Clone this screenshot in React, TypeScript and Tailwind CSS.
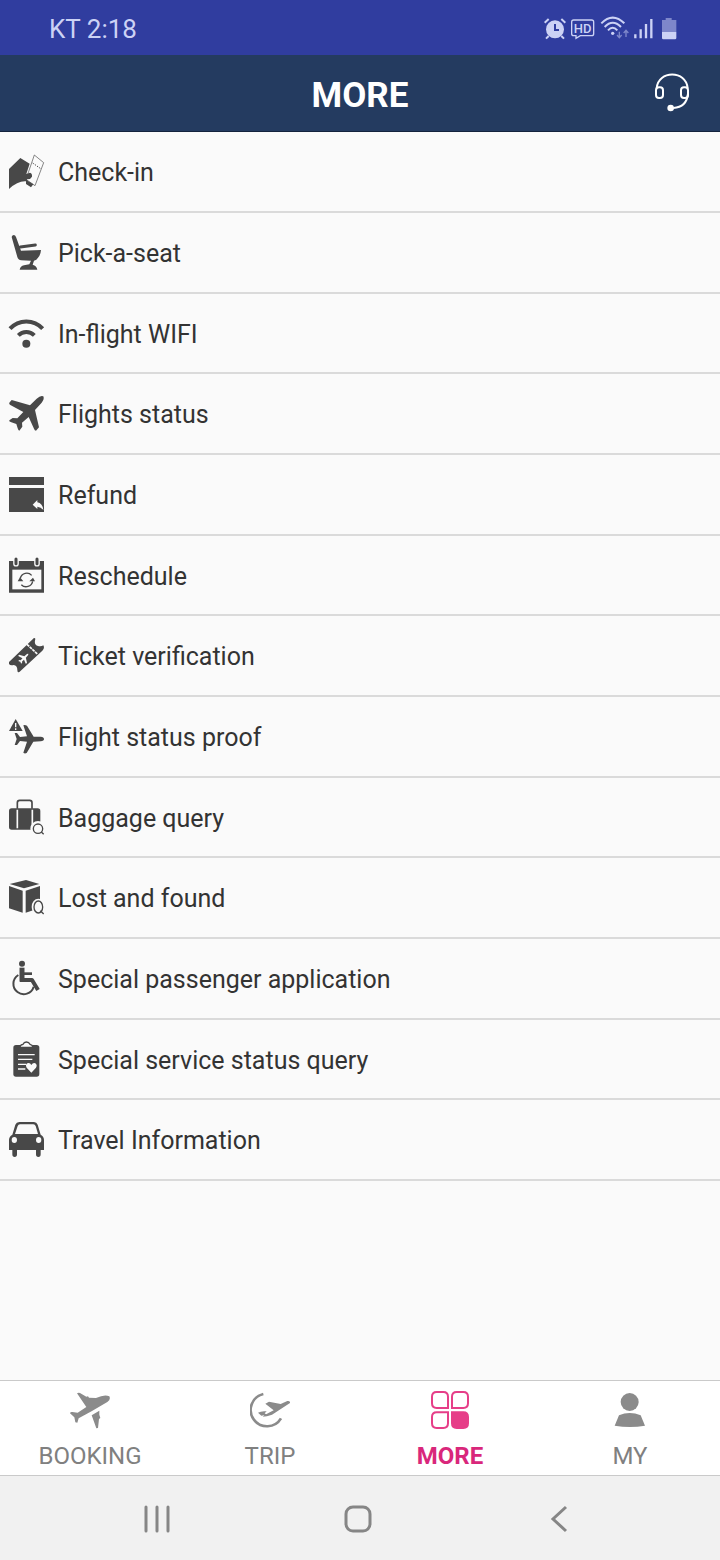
import type { ReactNode } from 'react';

interface MenuItem {
  key: string;
  label: string;
  icon: ReactNode;
}

const PLANE =
  'M86 8 Q98 -3 106 1 Q110 9 101 20 L81 42 L93 94 L84 104 Q80 104 78 98 L62 63 L42 80 L43 92 L34 104 Q31 104 29 97 L25 84 L8 78 Q2 76 4 73 L14 66 L28 67 L46 48 L7 27 Q2 24 4 20 L11 12 L66 28 Z';

const menuItems: MenuItem[] = [
  {
    key: 'check-in',
    label: 'Check-in',
    icon: (
      <>
        <path d="M79 3 L107 26 L81 95 L54 76 Z" fill="#fafafa" stroke="currentColor" strokeWidth="2" />
        <path d="M74 27 L98 44" stroke="currentColor" strokeWidth="3" strokeDasharray="4 4" />
        <path d="M3 105 V45 L37 12 L65 29 L55 60 L66 56 Q73 57 72 68 L66 75 L56 76 L60 81 L76 91 L69 100 L54 90 L54 82 Q30 80 3 105 Z" />
      </>
    ),
  },
  {
    key: 'seat',
    label: 'Pick-a-seat',
    icon: (
      <>
        <path d="M11 6 Q11 1 17 0 Q22 0 24 6 L39 47 L99 45 Q98 60 90 68 Q86 75 78 77 L74 89 Q86 92 88 104 H35 Q37 93 48 91 L64 88 L69 77 L40 76 Q30 75 28 66 Z" />
        <path d="M37 36 L82 30" stroke="currentColor" strokeWidth="9" strokeLinecap="round" />
      </>
    ),
  },
  {
    key: 'wifi',
    label: 'In-flight WIFI',
    icon: (
      <>
        <path d="M6 38 A66 66 0 0 1 104 38 M31 58 A34 34 0 0 1 79 58" fill="none" stroke="currentColor" strokeWidth="12" />
        <circle cx="55" cy="83" r="12" />
      </>
    ),
  },
  {
    key: 'status',
    label: 'Flights status',
    icon: <path d={PLANE} />,
  },
  {
    key: 'refund',
    label: 'Refund',
    icon: (
      <>
        <path d="M3 0 H108 V24 H3 Z M3 33 H108 V105 H3 Z" />
        <path d="M74 83 L88 69 V76 Q104 79 106 99 Q99 90 88 89 V96 Z" fill="#fafafa" />
      </>
    ),
  },
  {
    key: 'reschedule',
    label: 'Reschedule',
    icon: (
      <>
        <path d="M3 9 H108 V104 H3 Z" />
        <path d="M13 35 H100 V94 H13 Z" fill="#fafafa" />
        <path d="M24 3 V17 M87 3 V17" stroke="#fafafa" strokeWidth="17" strokeLinecap="round" />
        <path d="M24 3 V17 M87 3 V17" stroke="currentColor" strokeWidth="9" strokeLinecap="round" />
        <path d="M37 60 A20 20 0 0 1 71 52 M74 70 A20 20 0 0 1 40 80" fill="none" stroke="currentColor" strokeWidth="4" />
        <path d="M29 70 L36 58 L46 70 Z M64 70 L75 59 L81 70 Z" />
      </>
    ),
  },
  {
    key: 'verification',
    label: 'Ticket verification',
    icon: (
      <>
        <path d="M3 72 L74 4 Q79 -3 82 2 Q77 21 90 24 Q100 26 106 22 Q111 31 103 38 L35 101 Q28 106 28 96 Q28 82 17 81 Q7 84 3 78 Z" />
        <path d="M57 19 L88 48" stroke="#fafafa" strokeWidth="5" strokeDasharray="9 2" />
        <path d={PLANE} transform="translate(30 47) scale(0.29)" fill="#fafafa" />
      </>
    ),
  },
  {
    key: 'proof',
    label: 'Flight status proof',
    icon: (
      <>
        <path d="M3 36 L23 0 L44 36 Z" />
        <path d="M23 12 V25 M23 28 V33" stroke="#fafafa" strokeWidth="4" />
        <path d="M98 53 Q108 54 108 60 Q108 66 98 67 L76 68 L56 102 Q50 105 46 101 L57 68 L36 66 L27 78 H20 L26 60 L20 42 H27 L36 54 L57 52 L46 19 Q50 16 57 20 L77 53 Z" />
      </>
    ),
  },
  {
    key: 'baggage',
    label: 'Baggage query',
    icon: (
      <>
        <path d="M28 26 V8 Q28 1 35 1 H65 Q72 1 72 8 V26" fill="none" stroke="currentColor" strokeWidth="5" />
        <rect x="3" y="25" width="94" height="64" rx="8" />
        <path d="M28 29 V85 M73 29 V85" stroke="#fafafa" strokeWidth="5" />
        <circle cx="90" cy="86" r="23" fill="#fafafa" />
        <circle cx="90" cy="86" r="14" fill="none" stroke="currentColor" strokeWidth="4" />
        <path d="M100 96 L107 103" stroke="currentColor" strokeWidth="4" />
      </>
    ),
  },
  {
    key: 'lost',
    label: 'Lost and found',
    icon: (
      <>
        <path d="M5 12 L54 0 L94 12 L48 25 Z M3 18 L44 32 V98 L3 85 Z M53 32 L96 18 V84 L53 98 Z" />
        <ellipse cx="91" cy="81" rx="20" ry="25" fill="#fafafa" />
        <ellipse cx="91" cy="81" rx="13" ry="18" fill="none" stroke="currentColor" strokeWidth="4" />
        <path d="M97 92 L107 102" stroke="currentColor" strokeWidth="4" />
      </>
    ),
  },
  {
    key: 'special-passenger',
    label: 'Special passenger application',
    icon: (
      <>
        <circle cx="42" cy="8" r="9" />
        <g fill="none" stroke="currentColor">
          <path d="M42 20 V62" strokeWidth="15" />
          <path d="M36 57 H72 L90 87" strokeWidth="12" strokeLinejoin="round" />
          <path d="M46 38 H72" strokeWidth="8" />
          <path d="M31 42 A31 31 0 1 0 77 77" strokeWidth="6" />
        </g>
      </>
    ),
  },
  {
    key: 'special-service',
    label: 'Special service status query',
    icon: (
      <>
        <rect x="16" y="9" width="78" height="95" rx="8" />
        <path d="M35 16 Q37 8 45 7 Q48 0 55 0 Q63 0 66 7 Q73 8 75 16 Z" fill="#fafafa" stroke="currentColor" strokeWidth="4" />
        <path d="M30 38 H80 M30 52 H73 M30 67 H54 M30 81 H52" stroke="#fafafa" strokeWidth="4" />
        <path d="M70 92 L56 77 Q51 68 58 64 Q66 61 70 69 Q75 61 82 64 Q89 69 84 77 Z" fill="#fafafa" />
      </>
    ),
  },
  {
    key: 'travel',
    label: 'Travel Information',
    icon: (
      <>
        <path d="M34 0 H78 Q86 0 89 8 L98 38 Q108 43 108 54 V84 H98 V97 Q98 105 91 105 Q84 105 84 97 V84 H27 V97 Q27 105 20 105 Q13 105 13 97 V84 H3 V54 Q3 43 13 38 L22 8 Q25 0 34 0 Z" />
        <path d="M36 7 H76 Q81 7 83 12 L90 36 H21 L29 12 Q31 7 36 7 Z" fill="#fafafa" />
        <ellipse cx="19" cy="54" rx="8" ry="9" fill="#fafafa" />
        <ellipse cx="92" cy="54" rx="8" ry="9" fill="#fafafa" />
      </>
    ),
  },
];

const tabs: MenuItem[] = [
  {
    key: 'booking',
    label: 'BOOKING',
    icon: (
      <path d="M21 10 Q25 7 30 9 L49 20 L54 19 L57 23 L78 24 Q104 12 118 19 Q123 28 112 36 L66 63 L26 85 L22 98 L16 97 L13 82 L0 70 Q1 65 7 66 L23 68 L49 51 Z M65 76 L88 62 V74 L91 84 L87 87 L84 114 L79 115 Z" />
    ),
  },
  {
    key: 'trip',
    label: 'TRIP',
    icon: (
      <>
        <path d="M40 12 A49 49 0 1 0 93 85" fill="none" stroke="currentColor" strokeWidth="8" />
        <path d="M46 41 L57 35 L92 42 L112 33 Q121 32 120 39 L66 74 Q50 80 38 80 L44 75 L71 61 Z M24 68 Q34 62 50 64 L44 70 L50 74 L34 77 Z" />
      </>
    ),
  },
  {
    key: 'more',
    label: 'MORE',
    icon: (
      <g stroke="currentColor" strokeWidth="6">
        <path d="M20 6 H40 Q54 6 54 20 V54 H20 Q6 54 6 40 V20 Q6 6 20 6 Z" fill="none" />
        <path d="M80 6 H100 Q114 6 114 20 V40 Q114 54 100 54 H66 V20 Q66 6 80 6 Z" fill="none" />
        <path d="M20 67 H54 V100 Q54 114 40 114 H20 Q6 114 6 100 V81 Q6 67 20 67 Z" fill="none" />
        <path d="M66 67 H100 Q114 67 114 81 V100 Q114 114 100 114 H80 Q66 114 66 100 Z" />
      </g>
    ),
  },
  {
    key: 'my',
    label: 'MY',
    icon: (
      <>
        <circle cx="59" cy="36" r="27" />
        <path d="M14 107 L27 76 Q59 62 92 76 L105 107 Q60 115 14 107 Z" />
      </>
    ),
  },
];

export default function App() {
  return (
    <div className="flex min-h-screen flex-col bg-[#fafafa] font-[Roboto,sans-serif]">
      <StatusBar />

      <header className="grid h-[77px] grid-cols-[1fr_auto_1fr] items-center border-b border-[#14233d] bg-[#243b60] px-[30px] text-white">
        <h1 className="col-start-2 pt-1.5 text-[35px] leading-10 font-bold">MORE</h1>
        <button type="button" aria-label="Customer service" className="justify-self-end">
          <svg viewBox="0 0 108 120" className="h-10 w-9" fill="none" stroke="currentColor" strokeWidth="6">
            <path d="M8 46 C12 -9 97 -9 101 46" />
            <rect x="6" y="43" width="21" height="32" rx="9" />
            <rect x="81" y="43" width="21" height="32" rx="9" />
            <path d="M102 62 Q98 103 58 105" />
            <circle cx="50" cy="105" r="7" fill="currentColor" />
          </svg>
        </button>
      </header>

      <main className="flex-1">
        <ul>
          {menuItems.map((item) => (
            <li key={item.key} className="h-[81px] border-b-2 border-[#dadada] nth-[3n]:h-20">
              <a href={`#${item.key}`} className="flex h-full items-center gap-3.5 px-2 pt-px">
                <svg viewBox="0 0 108 108" className="size-9 shrink-0 overflow-visible text-[#484848]" fill="currentColor" aria-hidden="true">
                  {item.icon}
                </svg>
                <span className="pt-0.5 text-[25px] leading-8 text-[#333]">{item.label}</span>
              </a>
            </li>
          ))}
        </ul>
      </main>

      <nav className="grid h-[96px] grid-cols-4 border-y border-[#cacaca] bg-white">
        {tabs.map((tab) => (
          <a
            key={tab.key}
            href={`#${tab.key}`}
            className={`flex flex-col items-center gap-3 pt-[9px] ${
              tab.key === 'more' ? 'font-bold text-[#d9277b]' : 'text-[#808080]'
            }`}
          >
            <svg viewBox="0 0 120 120" className={`size-10 ${tab.key === 'more' ? 'text-[#e63e88]' : 'text-[#8b8b8b]'}`} fill="currentColor" aria-hidden="true">
              {tab.icon}
            </svg>
            <span className="text-2xl leading-7">{tab.label}</span>
          </a>
        ))}
      </nav>

      <SystemNav />
    </div>
  );
}

function StatusBar() {
  return (
    <div className="flex h-[55px] items-center justify-between bg-[#303d9f] pr-[43px] pl-[49px] text-[#ccd2f5]">
      <span className="pt-0.5 text-[26px] leading-8">KT 2:18</span>
      <div className="flex items-center gap-[5px]">
        {/* alarm */}
        <svg viewBox="0 0 66 72" className="h-6 w-[22px]" fill="none" stroke="currentColor" strokeWidth="6">
          <circle cx="33" cy="40" r="27" fill="currentColor" stroke="none" />
          <path d="M2 20 L14 9 M52 9 L64 20 M14 60 L6 68 M52 60 L60 68" />
          <path d="M33 24 V42 H45" stroke="#303d9f" />
        </svg>
        {/* HD voice */}
        <svg viewBox="0 0 72 72" className="h-6 w-6" fill="none" stroke="currentColor" strokeWidth="4">
          <path d="M8 12 H62 Q68 12 68 18 V53 Q68 59 62 59 H28 L15 67 V59 H8 Q2 59 2 53 V18 Q2 12 8 12 Z" />
          <text x="35" y="50" textAnchor="middle" fontSize="39" fontWeight="500" fill="currentColor" stroke="none">HD</text>
        </svg>
        {/* wifi with data arrows */}
        <svg viewBox="0 0 87 72" className="h-6 w-[29px]" fill="none" stroke="currentColor" strokeWidth="6">
          <path d="M4 22 Q38 -12 73 22 M14 33 Q38 8 63 33 M24 43 Q38 28 52 43" />
          <circle cx="38" cy="52" r="5" fill="currentColor" stroke="none" />
          <path d="M58 47 V64 M51 57 L58 65 L65 57 M78 63 V44 M71 51 L78 43 L85 51" strokeWidth="4" opacity="0.5" />
        </svg>
        {/* signal */}
        <svg viewBox="0 0 66 72" className="h-6 w-[22px]" stroke="currentColor" strokeWidth="7">
          <path d="M4 67 V55 M20 67 V40 M36 67 V24 M52 67 V9" />
        </svg>
        {/* battery */}
        <svg viewBox="0 0 48 72" className="h-6 w-4" fill="currentColor">
          <path d="M14 6 H32 V12 H46 V48 H3 V12 H14 Z" opacity="0.5" />
          <path d="M3 48 H46 V66 Q46 70 42 70 H7 Q3 70 3 66 Z" />
        </svg>
      </div>
    </div>
  );
}

function SystemNav() {
  return (
    <div className="grid h-[84px] grid-cols-3 place-items-center bg-[#f1f1f1] pt-0.5 pr-[60px] pl-14 text-[#868686]">
      <button type="button" aria-label="Recent apps">
        <svg viewBox="0 0 28 28" className="size-7" stroke="currentColor" strokeWidth="3" strokeLinecap="round">
          <path d="M3 2 V26 M14 2 V26 M25 2 V26" />
        </svg>
      </button>
      <button type="button" aria-label="Home">
        <svg viewBox="0 0 28 28" className="size-7" fill="none" stroke="currentColor" strokeWidth="3">
          <rect x="2" y="2" width="24" height="24" rx="7" />
        </svg>
      </button>
      <button type="button" aria-label="Back">
        <svg viewBox="0 0 28 28" className="size-7" fill="none" stroke="currentColor" strokeWidth="3">
          <path d="M21 2 L8 14 L21 26" />
        </svg>
      </button>
    </div>
  );
}
